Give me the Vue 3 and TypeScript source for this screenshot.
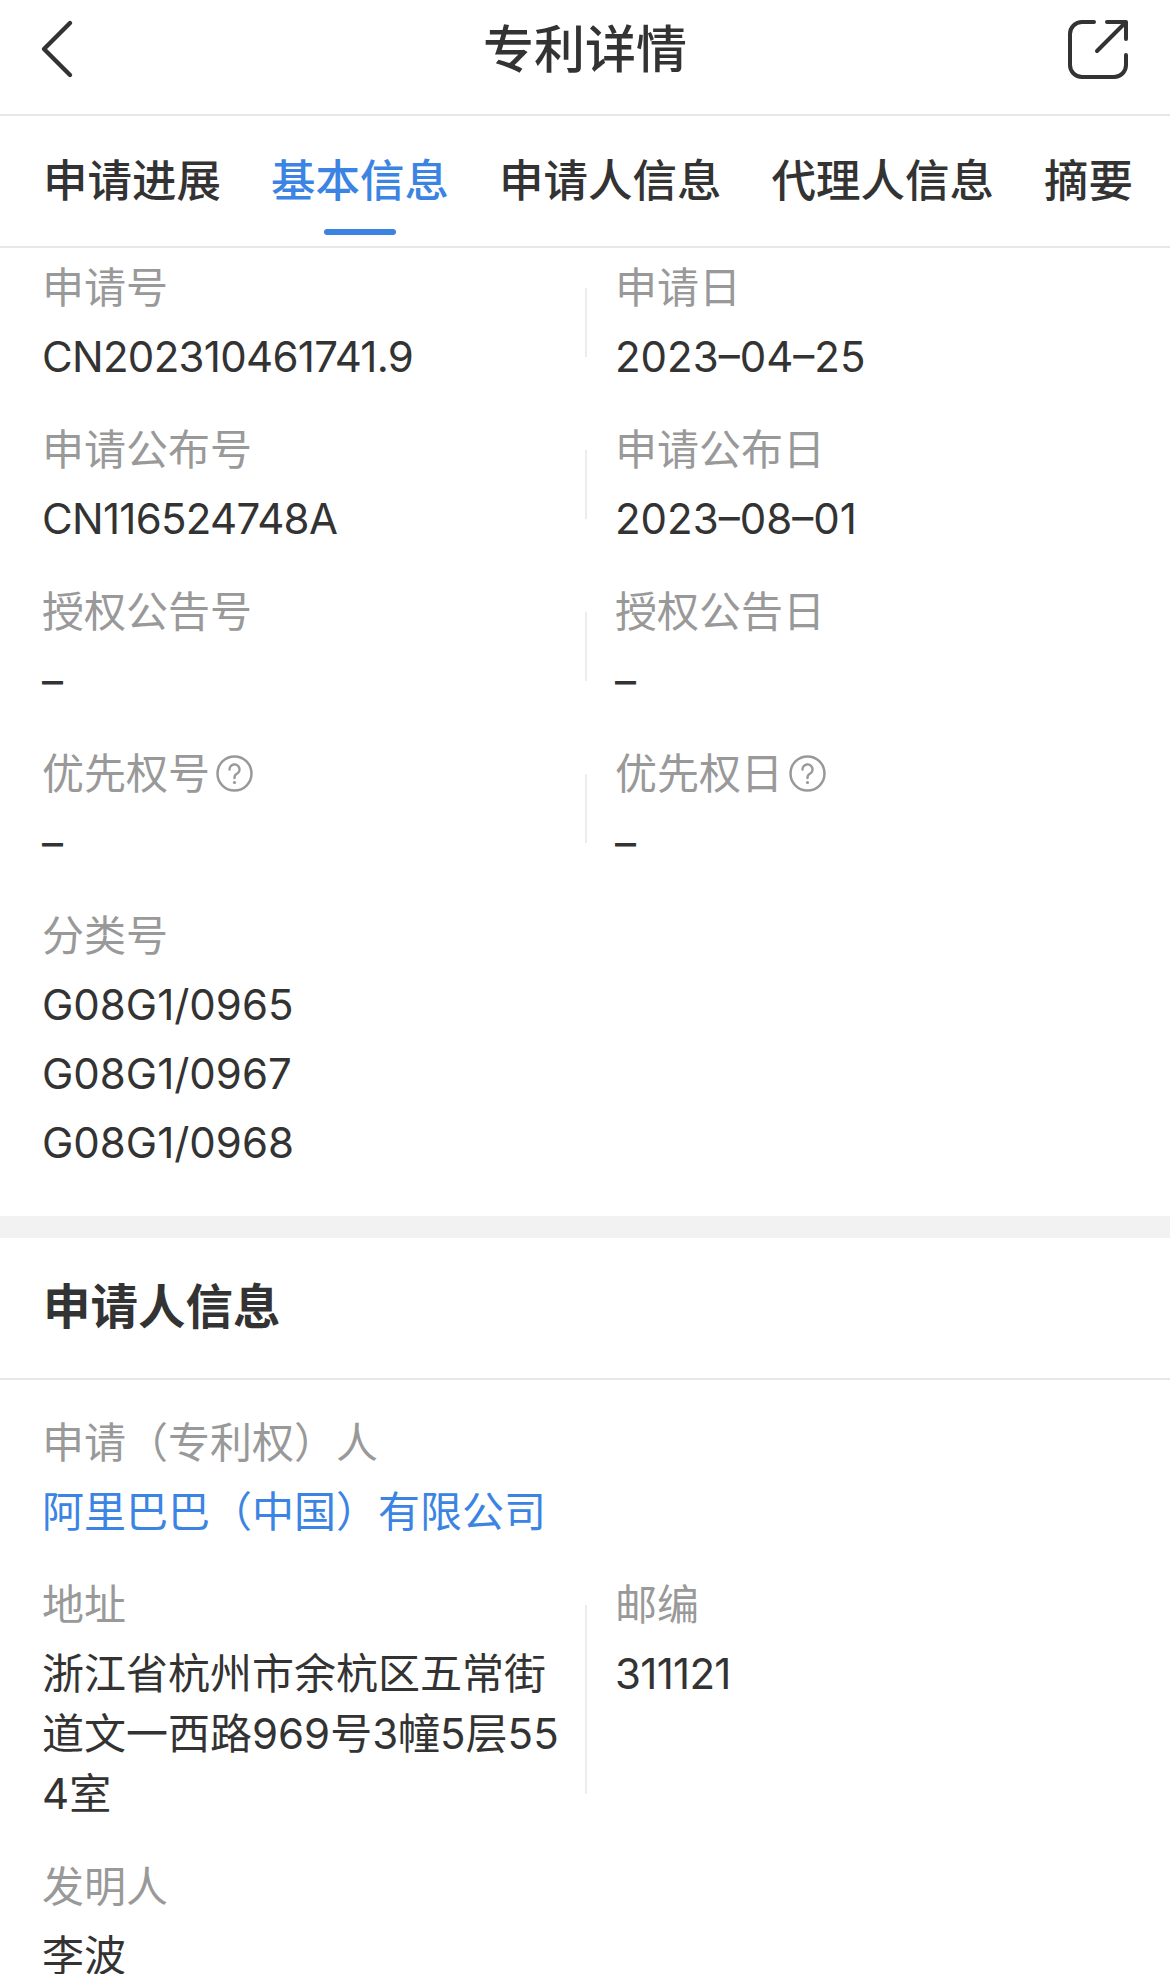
<script setup lang="ts">
interface Field {
  label: string
  values: string[]
  help?: boolean
  link?: boolean
  tight?: boolean
}

const tabs: string[] = ['申请进展', '基本信息', '申请人信息', '代理人信息', '摘要']
const activeTab = '基本信息'

const basicRows: Field[][] = [
  [
    { label: '申请号', values: ['CN202310461741.9'], tight: true },
    { label: '申请日', values: ['2023–04–25'] },
  ],
  [
    { label: '申请公布号', values: ['CN116524748A'], tight: true },
    { label: '申请公布日', values: ['2023–08–01'] },
  ],
  [
    { label: '授权公告号', values: ['–'] },
    { label: '授权公告日', values: ['–'] },
  ],
  [
    { label: '优先权号', values: ['–'], help: true },
    { label: '优先权日', values: ['–'], help: true },
  ],
  [{ label: '分类号', values: ['G08G1/0965', 'G08G1/0967', 'G08G1/0968'] }],
]

const applicantRows: Field[][] = [
  [{ label: '申请（专利权）人', values: ['阿里巴巴（中国）有限公司'], link: true }],
  [
    { label: '地址', values: ['浙江省杭州市余杭区五常街道文一西路969号3幢5层554室'] },
    { label: '邮编', values: ['311121'], tight: true },
  ],
  [{ label: '发明人', values: ['李波'] }],
]

const sections = [
  { title: '', rows: basicRows },
  { title: '申请人信息', rows: applicantRows },
]
</script>

<template>
  <div class="page">
    <header class="topbar">
      <svg class="back" width="34" height="60" viewBox="0 0 34 60" fill="none">
        <path d="M30 4 L4 30 L30 56" stroke="#333" stroke-width="4.4" stroke-linecap="round" stroke-linejoin="round" />
      </svg>
      <h1 class="title">专利详情</h1>
      <svg class="share" width="62" height="62" viewBox="0 0 62 62" fill="none">
        <path
          d="M27 4 H15 A12 12 0 0 0 3 16 V47 A12 12 0 0 0 15 59 H47 A12 12 0 0 0 59 47 V37"
          stroke="#333"
          stroke-width="4"
          stroke-linecap="round"
        />
        <path
          d="M30 33 L59 4 M40 4 H59 V21"
          stroke="#333"
          stroke-width="4"
          stroke-linecap="round"
          stroke-linejoin="round"
        />
      </svg>
    </header>

    <nav class="tabs">
      <span v-for="tab in tabs" :key="tab" class="tab" :class="{ active: tab === activeTab }">{{ tab }}</span>
    </nav>

    <section v-for="(section, s) in sections" :key="s" class="section">
      <h2 v-if="section.title" class="section-title">{{ section.title }}</h2>
      <div class="fields">
        <div v-for="(row, r) in section.rows" :key="r" class="row">
          <div v-for="(field, f) in row" :key="field.label" class="cell" :class="{ divided: f === 1, wide: row.length === 1 }">
            <div class="label">
              <span>{{ field.label }}</span>
              <svg v-if="field.help" class="help" width="37" height="37" viewBox="0 0 37 37" fill="none">
                <circle cx="18.5" cy="18.5" r="17" stroke="#999" stroke-width="2.5" />
                <path d="M13.5 14.5 A5 5 0 1 1 20.5 19 Q18.5 20 18.5 23" stroke="#999" stroke-width="2.4" stroke-linecap="round" />
                <circle cx="18.5" cy="27.5" r="1.6" fill="#999" />
              </svg>
            </div>
            <div v-for="value in field.values" :key="value" class="value" :class="{ link: field.link, tight: field.tight }">{{ value }}</div>
          </div>
        </div>
      </div>
    </section>
  </div>
</template>

<style scoped>
.page {
  width: 1170px;
  height: 1974px;
  overflow: hidden;
  background: #fff;
  color: #333;
  font-family: "Liberation Sans", "Noto Sans CJK SC", sans-serif;
}
.topbar {
  height: 98px;
  padding: 0 41px 16px 40px;
  border-bottom: 2px solid #e8e8e8;
  display: flex;
  align-items: center;
  justify-content: space-between;
  position: relative;
  box-sizing: content-box;
}
.title {
  margin: 0;
  font-size: 51px;
  font-weight: 500;
  line-height: 60px;
  position: absolute;
  left: 0;
  right: 0;
  top: 21px;
  text-align: center;
}
.tabs {
  height: 130px;
  border-bottom: 2px solid #e8e8e8;
  display: flex;
  align-items: center;
  gap: 50px;
  padding: 0 0 0 43px;
  font-size: 44.5px;
  font-weight: 500;
  box-sizing: content-box;
}
.tab {
  position: relative;
  line-height: 60px;
  white-space: nowrap;
  margin-top: 2px;
}
.tab.active {
  color: #3b84e3;
}
.tab.active::after {
  content: "";
  position: absolute;
  left: 53px;
  width: 72px;
  height: 6px;
  top: 77px;
  border-radius: 3px;
  background: #3b84e3;
}
.section + .section {
  border-top: 22px solid #f2f2f2;
}
.section-title {
  margin: 0;
  height: 140px;
  line-height: 140px;
  border-bottom: 2px solid #e8e8e8;
  padding-left: 43px;
  font-size: 47.5px;
  font-weight: 700;
}
.fields {
  padding: 10px 0 10px;
}
.section + .section .fields {
  padding-top: 33px;
}
.row {
  display: grid;
  grid-template-columns: 1fr 1fr;
  margin-bottom: 33px;
}
.cell {
  padding-left: 42px;
  position: relative;
  min-width: 0;
}
.cell:first-child {
  padding-right: 20px;
}
.cell.divided {
  padding-left: 30px;
}
.cell.divided::before {
  content: "";
  position: absolute;
  left: 0;
  top: 30px;
  bottom: 30px;
  width: 2px;
  background: #ececec;
}
.cell.wide {
  grid-column: 1 / -1;
}
.label {
  display: flex;
  align-items: center;
  gap: 6px;
  height: 52px;
  padding-bottom: 8px;
  font-size: 42px;
  color: #999;
}
.help {
  flex: none;
  margin-top: 6px;
}
.value {
  margin-top: 9px;
  font-family: Inter, "Noto Sans CJK SC", sans-serif;
  font-size: 42px;
  line-height: 60px;
  word-break: break-all;
}
.value.tight {
  letter-spacing: -0.7px;
}
.value.link {
  color: #3b84e3;
}
</style>

<style>
html,
body {
  margin: 0;
  overflow: hidden;
}
</style>
